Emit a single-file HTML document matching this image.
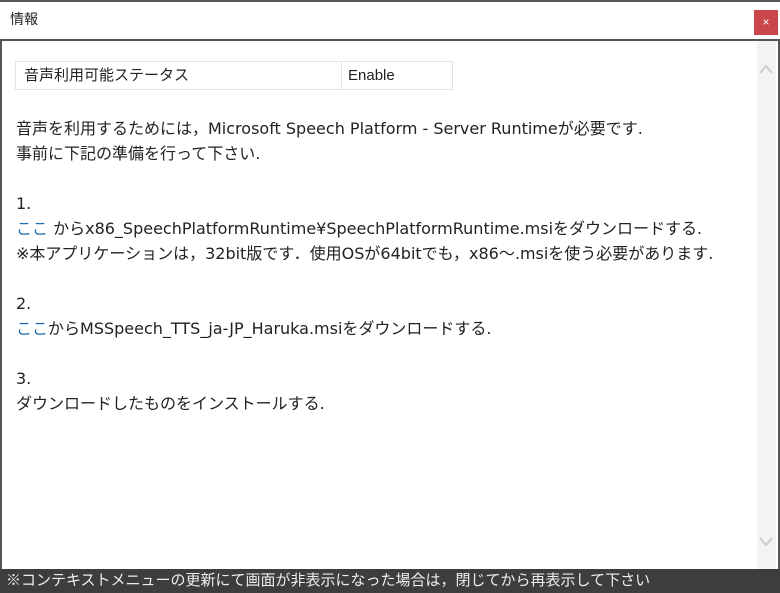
<!DOCTYPE html>
<html><head><meta charset="utf-8"><style>
html,body{margin:0;padding:0;width:780px;height:593px;overflow:hidden;background:#fff;font-family:"Liberation Sans","Noto Sans CJK JP",sans-serif;}
.top{position:absolute;left:0;top:0;width:780px;height:2px;background:#555;}
.title{position:absolute;left:10px;top:9px;font-size:14px;color:#222;}
.close{position:absolute;left:754px;top:10px;width:24px;height:25px;background:#c9474a;color:#fff;font-size:12px;text-align:center;line-height:24px;}
.frame{position:absolute;left:0;top:39px;width:776px;height:530px;border:2px solid #555;border-bottom:none;}
.sb{position:absolute;left:757px;top:41px;width:19px;height:528px;background:#f3f3f3;}
.table{position:absolute;left:15px;top:61px;width:436px;height:27px;border:1px solid #e4e4e4;font-size:15px;color:#222;}
.table div.c{position:absolute;top:0;line-height:27px;}
.div{position:absolute;left:325px;top:0;width:1px;height:27px;background:#e4e4e4;}
.txt{position:absolute;left:16px;top:116px;font-size:16px;line-height:25px;color:#222;white-space:pre;font-family:"DejaVu Sans","Noto Sans CJK JP",sans-serif;}
a{color:#1a6eb8;text-decoration:none;}
.status{position:absolute;left:0;top:569px;width:780px;height:24px;background:#3d3d3d;color:#eee;font-size:15px;line-height:24px;padding-left:6px;box-sizing:border-box;}
</style></head><body>
<div class="top"></div>
<div class="title">情報</div>
<div class="close">×</div>
<div class="frame"></div>
<div class="sb">
<svg width="19" height="528" style="position:absolute;left:0;top:0"><path d="M3 32 L9 25 L15 32" stroke="#ccc" stroke-width="2" fill="none"/><path d="M3 497 L9 504 L15 497" stroke="#ccc" stroke-width="2" fill="none"/></svg>
</div>
<div class="table"><div class="c" style="left:8px">音声利用可能ステータス</div><div class="div"></div><div class="c" style="left:332px">Enable</div></div>
<div class="txt">音声を利用するためには，Microsoft Speech Platform - Server Runtimeが必要です.
事前に下記の準備を行って下さい.

1.
<a>ここ</a> からx86_SpeechPlatformRuntime¥SpeechPlatformRuntime.msiをダウンロードする.
※本アプリケーションは，32bit版です．使用OSが64bitでも，x86～.msiを使う必要があります.

2.
<a>ここ</a>からMSSpeech_TTS_ja-JP_Haruka.msiをダウンロードする.

3.
ダウンロードしたものをインストールする.</div>
<div class="status">※コンテキストメニューの更新にて画面が非表示になった場合は，閉じてから再表示して下さい</div>
</body></html>
